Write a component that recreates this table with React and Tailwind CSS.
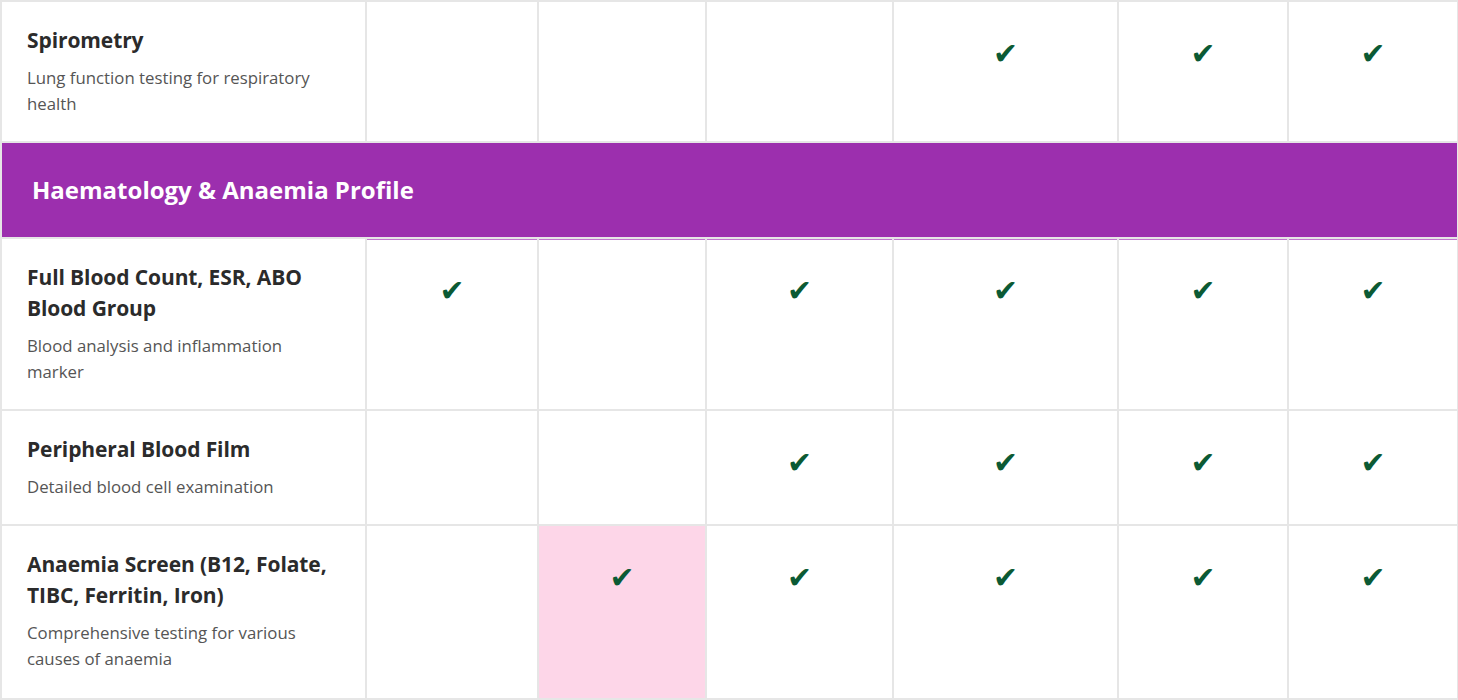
import React from 'react';

const rows = [
    {
        title: ['Spirometry'],
        desc: ['Lung function testing for respiratory', 'health'],
        checks: [false, false, false, true, true, true],
    },
    { section: 'Haematology & Anaemia Profile' },
    {
        title: ['Full Blood Count, ESR, ABO', 'Blood Group'],
        desc: ['Blood analysis and inflammation', 'marker'],
        checks: [true, false, true, true, true, true],
        afterSection: true,
    },
    {
        title: ['Peripheral Blood Film'],
        desc: ['Detailed blood cell examination'],
        checks: [false, false, true, true, true, true],
    },
    {
        title: ['Anaemia Screen (B12, Folate,', 'TIBC, Ferritin, Iron)'],
        desc: ['Comprehensive testing for various', 'causes of anaemia'],
        checks: [false, true, true, true, true, true],
        highlight: 1,
        last: true,
    },
];

const widths = [365, 172, 168, 187, 225, 170, 170];

const Lines = ({ lines }) =>
    lines.map((l, i) => (
        <React.Fragment key={i}>
            {l}
            {i < lines.length - 1 && <br />}
        </React.Fragment>
    ));

export default function App() {
    return (
        <div className="w-[1458px] bg-white font-['Open_Sans','Noto_Sans',sans-serif]">
            <table className="w-[1457px] table-fixed border-collapse">
                <colgroup>
                    {widths.map((w, i) => (
                        <col key={i} style={{ width: w }} />
                    ))}
                </colgroup>
                <tbody>
                    {rows.map((row, r) =>
                        row.section ? (
                            <tr key={r}>
                                <td
                                    colSpan={7}
                                    className="h-[96px] border-2 border-[#e6e6e6] bg-[#9c2fae] pl-[30px] align-middle text-[24px] font-bold text-white"
                                >
                                    {row.section}
                                </td>
                            </tr>
                        ) : (
                            <tr key={r}>
                                <td
                                    className={`border-2 border-[#e6e6e6] pt-[23px] pl-[25px] pr-1 align-top ${row.last ? 'pb-[26px]' : 'pb-[24px]'}`}
                                >
                                    <div className="text-[21px] leading-[31px] font-bold tracking-[-0.1px] text-[#2b2b2b]">
                                        <Lines lines={row.title} />
                                    </div>
                                    <div className="mt-[9px] text-[16.8px] leading-[26px] text-[#555555]">
                                        <Lines lines={row.desc} />
                                    </div>
                                </td>
                                {row.checks.map((c, i) => (
                                    <td
                                        key={i}
                                        className={`border-2 border-[#e6e6e6] pt-[37px] text-center align-top ${row.highlight === i ? 'bg-[#fdd6e8]' : ''} ${row.afterSection ? 'shadow-[inset_0_1px_0_#c274cf]' : ''}`}
                                    >
                                        {c && (
                                            <span className="font-['DejaVu_Sans',sans-serif] text-[30px] leading-[30px] text-[#0b5a34]">
                                                ✔
                                            </span>
                                        )}
                                    </td>
                                ))}
                            </tr>
                        )
                    )}
                </tbody>
            </table>
            {/* top edge of the next section, cut off by the viewport */}
            <div className="h-[4px] w-[1457px] border-t-2 border-[#c79bd2] bg-[#9c2fae]" />
        </div>
    );
}
